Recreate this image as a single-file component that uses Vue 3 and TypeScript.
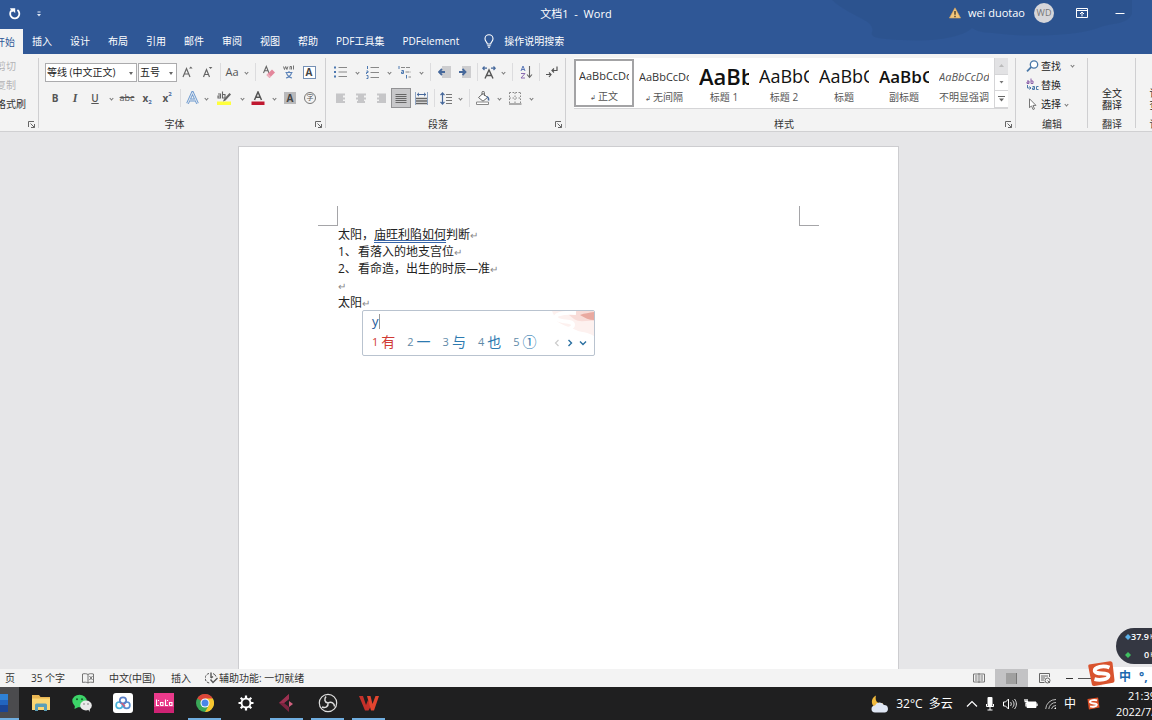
<script setup lang="ts">
import { ref } from 'vue'

interface StyleItem {
  sample: string
  name: string
  kind: string
  mark?: boolean
}

const tabs: string[] = ['插入', '设计', '布局', '引用', '邮件', '审阅', '视图', '帮助', 'PDF工具集', 'PDFelement']

const styleItems: StyleItem[] = [
  { sample: 'AaBbCcDd', name: '正文', kind: 'body', mark: true },
  { sample: 'AaBbCcDd', name: '无间隔', kind: 'body', mark: true },
  { sample: 'AaBb', name: '标题 1', kind: 'h1' },
  { sample: 'AaBbC', name: '标题 2', kind: 'h2' },
  { sample: 'AaBbC', name: '标题', kind: 'h2' },
  { sample: 'AaBbC', name: '副标题', kind: 'sub' },
  { sample: 'AaBbCcDd', name: '不明显强调', kind: 'em' },
]
const activeStyle = ref(0)

const candidates: string[] = ['有', '一', '与', '也', '①']
const fontName = ref('等线 (中文正文)')
const fontSize = ref('五号')
</script>

<template>
  <div class="screen">
    <header class="titlebar">
      <svg class="swirl" width="360" height="54" viewBox="0 0 360 54"><path d="M40 0h300v14c-6 12-20 8-34 14s-60 10-96 6c-14-2-20 0-30-6-10 10-40 14-70 12-22-1-32-2-30-8 4-12-20-14-40-32z" fill="#2b4f88" opacity=".45" /></svg>
      <div class="quick">
        <button aria-label="重复">
          <svg width="14" height="14" viewBox="0 0 14 14"><path d="M3.400 3.600A4.600 4.600 0 1 0 9.400 3" fill="none" stroke="#fff" stroke-width="1.800" /><path d="M2 1.200h5.200v5L5.600 4.400 3.800 5z" fill="#fff" /></svg>
        </button>
        <button aria-label="自定义快速访问工具栏">
          <svg width="6" height="8" viewBox="0 0 6 8"><path d="M1.500 2h3" stroke="#dfe7f5" /><path d="M1 4h4L3 6.500z" fill="#dfe7f5" /></svg>
        </button>
      </div>
      <h1>文档1&nbsp; -&nbsp; Word</h1>
      <div class="account">
        <svg width="12" height="12" viewBox="0 0 12 12"><path d="M6 .8 11.600 11H.4z" fill="#f3c77c" stroke="#d9a55a" stroke-width=".6" /><path d="M6 4v3.800M6 8.800v1.400" stroke="#3a3020" stroke-width="1.300" /></svg>
        <span class="user">wei duotao</span>
        <span class="avatar">WD</span>
        <button class="display" aria-label="功能区显示选项">
          <svg width="12" height="10" viewBox="0 0 12 10"><path d="M.5.5h11v9H.5zM.5 2.500h11M6 8.400V4.200M4 6l2-2 2 2" fill="none" stroke="#fff" /></svg>
        </button>
        <button class="min" aria-label="最小化"><svg width="10" height="3" viewBox="0 0 10 3"><path d="M.5 1.500h9" stroke="#fff" /></svg></button>
      </div>
    </header>

    <nav class="tabs">
      <button class="tab current">开始</button>
      <button v-for="t in tabs" :key="t" class="tab">{{ t }}</button>
      <button class="tab tell">
        <svg width="12" height="14" viewBox="0 0 12 14"><path d="M4.300 10C4.300 8 2 7.500 2 4.700a4 4 0 0 1 8 0C10 7.500 7.700 8 7.700 10zM4.300 11.700h3.400M5 13.200h2" fill="none" stroke="#fff" stroke-width="1.100" /></svg>
        操作说明搜索
      </button>
    </nav>

    <section class="ribbon">
      <div class="group clip">
        <div class="cliplist">
          <button class="off">剪切</button>
          <button class="off">复制</button>
          <button>格式刷</button>
        </div>
        <button class="launch" aria-label="剪贴板设置"><svg width="7" height="7" viewBox="0 0 7 7"><path d="M.5 6V.5H6M2.500 2.500l4 4M6.500 3v3.500H3" fill="none" stroke="#666" /></svg></button>
      </div>

      <div class="group font">
        <div class="row">
          <label class="combo wide"><select v-model="fontName" aria-label="字体"><option>等线 (中文正文)</option></select><i class="tri"></i></label>
          <label class="combo"><select v-model="fontSize" aria-label="字号"><option>五号</option></select><i class="tri"></i></label>
          <button class="ic" aria-label="增大字号"><svg width="14" height="14" viewBox="0 0 14 14"><path d="M3 12 6.500 3.500 10 12M4.300 9h4.400" fill="none" stroke="#666" stroke-width="1.200" /><path d="M9 3.500 10.800 1.500l1.800 2z" fill="#666" /></svg></button>
          <button class="ic" aria-label="减小字号"><svg width="14" height="14" viewBox="0 0 14 14"><path d="M3.500 12 6.500 4.500 9.500 12M4.700 9.500h3.600" fill="none" stroke="#666" stroke-width="1.200" /><path d="M8.800 2h3.600l-1.800 2z" fill="#666" /></svg></button>
          <i class="sep"></i>
          <button class="ic s16 aa">Aa</button>
          <button class="caret" aria-label="更改大小写选项"></button>
          <i class="sep"></i>
          <button class="ic" aria-label="清除格式"><svg width="14" height="14" viewBox="0 0 14 14"><path d="M1.500 8 4.300 1.500 7 8M2.500 5.800h3.600" fill="none" stroke="#666" stroke-width="1.100" /><path d="m4.500 10 5.500-5.500 3 3L7.500 13z" fill="#e3869b" /><path d="m4.500 10 1.500-1.500 3 3L7.500 13z" fill="#eeb1bf" /></svg></button>
          <button class="ic" aria-label="拼音指南"><svg width="14" height="14" viewBox="0 0 14 14"><path d="m1.500 1.500 1 3 1.200-3 1.200 3 1-3M8 4.500v-3h1.500v3M11.500.5v4" fill="none" stroke="#666" stroke-width=".9" /><path d="M3.500 7.500h7M7 6v1.500M4.500 8c.8 2.500 3 4.500 5.500 5M9.500 8c-.8 2.500-3 4.500-5.500 5" fill="none" stroke="#5b82b8" stroke-width="1.100" /></svg></button>
          <button class="ic" aria-label="字符边框"><span class="boxed">A</span></button>
        </div>
        <div class="row">
          <button class="ic b">B</button>
          <button class="ic i">I</button>
          <button class="ic u">U</button>
          <button class="caret" aria-label="下划线选项"></button>
          <button class="ic strike">abc</button>
          <button class="ic x">x<sub>2</sub></button>
          <button class="ic x">x<sup>2</sup></button>
          <i class="sep"></i>
          <button class="ic s16" aria-label="文本效果"><svg width="13" height="14" viewBox="0 0 13 14"><path d="M1.500 12.500 6.500 1.500l5 11M3.500 9h6" fill="none" stroke="#6f9bd0" stroke-width="2.800" /><path d="M1.500 12.500 6.500 1.500l5 11M3.500 9h6" fill="none" stroke="#f3f3f3" stroke-width=".9" /></svg></button>
          <button class="caret" aria-label="文本效果选项"></button>
          <button class="ic s24" aria-label="突出显示"><svg width="16" height="14" viewBox="0 0 16 14"><path d="M1 10.500h14V14H1z" fill="#ffff3c" /><path d="M2 3h2.500v4H2V5h2.500M6.500.5V7h2.500V3.500H6.500" fill="none" stroke="#666" stroke-width="1.100" /><path d="m7 10.500 1-2.500 5.500-6 1.500 1.500-5.500 6z" fill="#666" /></svg></button>
          <button class="caret" aria-label="突出显示颜色"></button>
          <button class="ic" aria-label="字体颜色"><svg width="14" height="14" viewBox="0 0 14 14"><path d="M3.500 9 7 1l3.500 8M4.700 6.300h4.600" fill="none" stroke="#555" stroke-width="1.500" /><path d="M.5 10.500h13V14H.5z" fill="#c01830" /></svg></button>
          <button class="caret" aria-label="字体颜色选项"></button>
          <button class="ic" aria-label="字符底纹"><span class="shade">A</span></button>
          <button class="ic" aria-label="带圈字符"><span class="ring">字</span></button>
        </div>
        <h2>字体</h2>
        <button class="launch" aria-label="字体设置"><svg width="7" height="7" viewBox="0 0 7 7"><path d="M.5 6V.5H6M2.500 2.500l4 4M6.500 3v3.500H3" fill="none" stroke="#666" /></svg></button>
      </div>

      <div class="group para">
        <div class="row">
          <button class="ic" aria-label="项目符号"><svg width="14" height="12" viewBox="0 0 14 12"><path d="M0 .5h2v2H0zM0 5h2v2H0zM0 9.500h2v2H0z" fill="#4d78b0" /><path d="M4.500 1.500H13M4.500 6H13M4.500 10.500H13" stroke="#888" /></svg></button>
          <button class="caret" aria-label="项目符号库"></button>
          <button class="ic" aria-label="编号"><svg width="14" height="13" viewBox="0 0 14 13"><path d="M1.500 0v3M.5 5h1.500v1.500H.5V8M.5 9.500H2V12.500H.5" fill="none" stroke="#4d78b0" /><path d="M4.500 1.500H13M4.500 6.500H13M4.500 11.500H13" stroke="#888" /></svg></button>
          <button class="caret" aria-label="编号库"></button>
          <button class="ic" aria-label="多级列表"><svg width="14" height="13" viewBox="0 0 14 13"><path d="M1 0v3M3.500 4.500H5.500V7.500H3.500V6H5.500M8.500 9v3.500" fill="none" stroke="#4d78b0" /><path d="M3 1.500h10M7.500 6H13M10.500 11H13" stroke="#888" stroke-dasharray="4 1" /></svg></button>
          <button class="caret" aria-label="多级列表库"></button>
          <i class="sep"></i>
          <button class="ic" aria-label="减少缩进量"><svg width="13" height="12" viewBox="0 0 13 12"><path d="M4 0h9v12H4z" fill="#cdcdcf" /><path d="M1 6h6M4 3 1 6l3 3" fill="none" stroke="#46689b" stroke-width="1.800" /></svg></button>
          <button class="ic" aria-label="增加缩进量"><svg width="13" height="12" viewBox="0 0 13 12"><path d="M4 0h9v12H4z" fill="#cdcdcf" /><path d="M1 6h6M4.500 3l3 3-3 3" fill="none" stroke="#46689b" stroke-width="1.800" /></svg></button>
          <i class="sep"></i>
          <button class="ic s16" aria-label="中文版式"><svg width="14" height="13" viewBox="0 0 14 13"><path d="M3 12.500 7 4l4 8.500M4.500 9.500h5" fill="none" stroke="#555" stroke-width="1.400" /><path d="M.5 2.200h4.500M9 2.200h4.500M2.500.5.800 2.200 2.500 4M11.500.5l1.700 1.700L11.500 4" fill="none" stroke="#46689b" stroke-width="1.200" /></svg></button>
          <button class="caret" aria-label="中文版式选项"></button>
          <i class="sep"></i>
          <button class="ic" aria-label="排序"><svg width="13" height="14" viewBox="0 0 13 14"><path d="M1 6 3 1l2 5M1.600 4.500h2.800" fill="none" stroke="#5b78b8" /><path d="M1 8.500h4L1 13h4" fill="none" stroke="#8a6ab0" /><path d="M9.500 1v11M7 9.500l2.500 2.800L12 9.500" fill="none" stroke="#666" stroke-width="1.100" /></svg></button>
          <i class="sep"></i>
          <button class="ic s16" aria-label="显示编辑标记"><svg width="13" height="12" viewBox="0 0 13 12"><path d="M12 .5v4H7M9 2.500l-2 2 2 2M1 8.500h5M4 6.500l2 2-2 2.500" fill="none" stroke="#555" stroke-width="1.200" /></svg></button>
        </div>
        <div class="row">
          <button class="ic" aria-label="左对齐"><svg width="12" height="10" viewBox="0 0 12 10"><path d="M1 1.500h9M1 3.500h7M1 5.500h9M1 7.500h7M1 9h9" stroke="#c6c6c8" stroke-width="2" /></svg></button>
          <button class="ic" aria-label="居中"><svg width="12" height="10" viewBox="0 0 12 10"><path d="M1 1.500h10M3 3.500h6M1 5.500h10M3 7.500h6M2 9h8" stroke="#c6c6c8" stroke-width="2" /></svg></button>
          <button class="ic" aria-label="右对齐"><svg width="12" height="10" viewBox="0 0 12 10"><path d="M2 1.500h9M4 3.500h7M2 5.500h9M4 7.500h7M2 9h9" stroke="#c6c6c8" stroke-width="2" /></svg></button>
          <button class="ic pressed" aria-label="两端对齐"><svg width="12" height="11" viewBox="0 0 12 11"><path d="M.5 1.500h11M.5 3.500h11M.5 5.500h11M.5 7.500h11M.5 9.500h11" stroke="#666" /></svg></button>
          <button class="ic" aria-label="分散对齐"><svg width="13" height="13" viewBox="0 0 13 13"><path d="M.5 0v13M12.500 0v13" stroke="#8fa5c4" /><path d="M2 2.500h9M4 .8 2.200 2.500 4 4.200M9 .8l1.800 1.700L9 4.200" fill="none" stroke="#46689b" /><path d="M1 6.500h11M1 9h11M1 11.500h11" stroke="#666" stroke-width="1.300" /></svg></button>
          <i class="sep"></i>
          <button class="ic s16" aria-label="行距"><svg width="12" height="13" viewBox="0 0 12 13"><path d="M2.500 1v11M.5 3.200l2-2.200 2 2.200M.5 9.800l2 2.200 2-2.200" fill="none" stroke="#46689b" stroke-width="1.200" /><path d="M6 2.500h6M6 5.500h6M6 8.500h6M6 11.500h6" stroke="#777" /></svg></button>
          <button class="caret" aria-label="行距选项"></button>
          <i class="sep"></i>
          <button class="ic" aria-label="底纹"><svg width="14" height="14" viewBox="0 0 14 14"><path d="m2.500 6.500 4.500-4 4.500 4-4.500 3.700z" fill="#fff" stroke="#666" /><path d="M6 4V1.500a1.200 1.200 0 0 1 2.400 0V5" fill="none" stroke="#666" /><path d="M11 5.500c1.500 1 1.800 2.500 1.500 4" fill="none" stroke="#46689b" stroke-width="1.500" /><path d="M.5 11h12v2.500H.5z" fill="#fff" stroke="#888" /></svg></button>
          <button class="caret" aria-label="底纹颜色"></button>
          <button class="ic" aria-label="边框"><svg width="13" height="13" viewBox="0 0 13 13"><path d="M.5.5h11M11.500.5v11M6 .5v11M.5 6h11M.5.5v11" fill="none" stroke="#888" stroke-dasharray="1.500 1.500" /><path d="M0 12h12.500" stroke="#666" /></svg></button>
          <button class="caret" aria-label="边框选项"></button>
        </div>
        <h2>段落</h2>
        <button class="launch" aria-label="段落设置"><svg width="7" height="7" viewBox="0 0 7 7"><path d="M.5 6V.5H6M2.500 2.500l4 4M6.500 3v3.500H3" fill="none" stroke="#666" /></svg></button>
      </div>

      <div class="group styles">
        <div class="gallery">
          <button
            v-for="(s, i) in styleItems"
            :key="i"
            class="style"
            :class="{ chosen: i === activeStyle }"
            @click="activeStyle = i"
          >
            <span class="sample" :class="s.kind">{{ s.sample }}</span>
            <span class="sname"><small v-if="s.mark">↲</small>{{ s.name }}</span>
          </button>
          <div class="scroll">
            <button class="dim" aria-label="上一行"><svg width="5" height="3" viewBox="0 0 5 3"><path d="M0 3h5L2.500 0z" fill="#bbb" /></svg></button>
            <button aria-label="下一行"><svg width="5" height="3" viewBox="0 0 5 3"><path d="M.5 0h4L2.500 2.500z" fill="#777" /></svg></button>
            <button aria-label="更多样式"><svg width="7" height="6" viewBox="0 0 7 6"><path d="M0 .5h7" stroke="#666" /><path d="M1 2.500h5L3.500 5.500z" fill="#666" /></svg></button>
          </div>
        </div>
        <h2>样式</h2>
        <button class="launch" aria-label="样式窗格"><svg width="7" height="7" viewBox="0 0 7 7"><path d="M.5 6V.5H6M2.500 2.500l4 4M6.500 3v3.500H3" fill="none" stroke="#666" /></svg></button>
      </div>

      <div class="group edit">
        <div class="editlist">
          <button><svg width="13" height="12" viewBox="0 0 13 12"><circle cx="8" cy="4.500" r="3.700" fill="#fff" stroke="#4a78a8" stroke-width="1.300" /><path d="M5.200 7.200 1 11.300" stroke="#4a78a8" stroke-width="1.800" /></svg>查找<i class="chev far"></i></button>
          <button><svg width="13" height="13" viewBox="0 0 13 13"><path d="M1 3h2v2.500H1V4h2M5 .5v5h2V3H5" fill="none" stroke="#8a5fa8" /><path d="M1.500 7v3h3M3.500 8.500 5 10l-1.500 1.500" fill="none" stroke="#4a78a8" /><path d="M6.500 8.500h2v3h-2V10h2M12.500 8.500H10.500v3h2" fill="none" stroke="#4a78a8" /></svg>替换</button>
          <button><svg width="13" height="12" viewBox="0 0 13 12"><path d="M3.500.8v9l2-2 1.500 3.700 1.500-.6L7 7.400h3z" fill="#fff" stroke="#777" /></svg>选择<i class="chev"></i></button>
        </div>
        <h2>编辑</h2>
      </div>
      <div class="group trans">
        <button class="big">全文<br />翻译</button>
        <h2>翻译</h2>
      </div>
      <div class="group paper">
        <button class="big">论文<br />查重</button>
        <h2>论文</h2>
      </div>
    </section>

    <main class="workspace">
      <article class="page">
        <div class="corners"><i></i><i class="right"></i></div>
        <div class="text">
          <p>太阳，<u>庙旺利陷如何</u>判断<b>↵</b></p>
          <p><span class="num">1、</span>看落入的地支宫位<b>↵</b></p>
          <p><span class="num">2、</span>看命造，出生的时辰—准<b>↵</b></p>
          <p><b>↵</b></p>
          <p>太阳<b>↵</b></p>
        </div>
        <div class="ime">
          <svg class="skin" width="50" height="26" viewBox="0 0 50 26"><path d="M8 0h42v25c-8-5-12-3-18-6S16 14 12 9z" fill="#fdf1ef" /><path d="M20 0h30v10c-8-1-14 2-20-2z" fill="#f8dcd8" /><path d="M36 4c5-2 9-2 14-3v8c-5 0-9-2-14-5z" fill="#e9a9a0" /><path d="M32 2C18 1 8 4 13 8s16 1 16 6-14 6-24 3" fill="none" stroke="#fff" stroke-width="4" /></svg>
          <div class="typed">y</div>
          <div class="cands">
            <button v-for="(c, i) in candidates" :key="c" :class="{ first: i === 0 }"><small>{{ i + 1 }}</small>{{ c }}</button>
            <span class="pager">
              <button aria-label="上一页"><svg width="8" height="8" viewBox="0 0 8 8"><path d="M5.500 1 2.500 4l3 3" fill="none" stroke="#ccc" stroke-width="1.200" /></svg></button>
              <button aria-label="下一页"><svg width="8" height="8" viewBox="0 0 8 8"><path d="m2.500 1 3 3-3 3" fill="none" stroke="#2a6fa0" stroke-width="1.400" /></svg></button>
              <button aria-label="展开"><svg width="8" height="8" viewBox="0 0 8 8"><path d="m1 2.500 3 3 3-3" fill="none" stroke="#2a6fa0" stroke-width="1.400" /></svg></button>
            </span>
          </div>
        </div>
      </article>
      <aside class="net">
        <div><i class="up"></i>37.9<small>K/s</small></div>
        <div><i class="down"></i>0<small>K/s</small></div>
      </aside>
    </main>

    <footer class="status">
      <span class="pg">页</span>
      <span class="words">35 个字</span>
      <svg class="book" width="12" height="11" viewBox="0 0 12 11"><path d="M6 1.500C4.500.5 2.500.5.500 1v8.500c2-.5 4-.5 5.500.5zM6 1.500C7.500.5 9 .5 11.500 1v8.500c-2-.5-4-.5-5.500.5M7.500 3l3 4M10.500 3l-3 4" fill="none" stroke="#666" stroke-width=".9" /></svg>
      <span class="lang">中文(中国)</span>
      <span class="ins">插入</span>
      <svg width="13" height="12" viewBox="0 0 13 12"><path d="M4 1.500A4.800 4.800 0 0 0 5 11" fill="none" stroke="#555" stroke-dasharray="2.500 1" /><path d="M6 .5v5.500M6 6l2-1.500M5.500 7.500 8 10.500l4.500-4.500" fill="none" stroke="#555" stroke-width="1.400" /><path d="M8 1.500a5 5 0 0 1 3 3" fill="none" stroke="#555" /></svg>
      <span class="acc">辅助功能: 一切就绪</span>
      <div class="views">
        <button aria-label="阅读视图"><svg width="12" height="10" viewBox="0 0 12 10"><path d="M.5 1h11v8H.5zM6 0v10M2 3h2.500M2 5h2.500M2 7h2.500M7.500 3H10M7.500 5H10M7.500 7H10" fill="none" stroke="#777" /></svg></button>
        <button class="on" aria-label="页面视图"><svg width="11" height="11" viewBox="0 0 11 11"><path d="M0 0h11v11H0z" fill="#a0a0a0" /><path d="M10.500 0v11" stroke="#777" /></svg></button>
        <button aria-label="Web 版式视图"><svg width="12" height="11" viewBox="0 0 12 11"><path d="M10.500 4V.5H.5v9h5M2 3h7M2 5h4M2 7h3" fill="none" stroke="#666" /><circle cx="8.500" cy="7.500" r="2.500" fill="none" stroke="#666" /><path d="M8.500 7.500 11 10" stroke="#666" /></svg></button>
      </div>
      <button class="zoomout" aria-label="缩小"><svg width="7" height="3" viewBox="0 0 7 3"><path d="M0 1.500h7" stroke="#333" /></svg></button>
      <i class="track"></i>
      <div class="sogou">
        <svg width="27" height="27" viewBox="0 0 27 27"><path d="M1 4.500 22 1.200q2-.2 2.500 1.600l2 17.500q.1 2-1.500 2.500L6.500 26q-2 .2-2.600-1.500L.3 6.500Q0 5 1 4.500z" fill="#d9532e" /><path d="M21.500 7.500C15 5 6.500 7 6.700 10.700c.2 4.300 14 1.300 13.800 5.300C20.300 19.500 12 20.700 6.500 19.200" fill="none" stroke="#fff" stroke-width="3.800" /></svg>
        <strong>中</strong><strong class="punct">°,</strong>
      </div>
    </footer>

    <footer class="taskbar">
      <button class="task word" aria-label="Word"><svg width="8" height="18" viewBox="0 0 8 18"><path d="M0 0h8v6H0z" fill="#2f82d8" /><path d="M0 6h8v5H0z" fill="#2265c0" /><path d="M0 11h8v7H0z" fill="#1a4596" /></svg></button>
      <button class="task" aria-label="文件资源管理器"><svg width="20" height="18" viewBox="0 0 20 18"><path d="M1 1h7l1.500 2H19v13H1z" fill="#e9b653" /><path d="M1 4.500h18V16H1z" fill="#fbd774" /><path d="M4 17v-6q0-1.500 1.500-1.500h9Q16 9.500 16 11v6h-3v-4H7v4z" fill="#5a9fb8" /></svg></button>
      <button class="task" aria-label="微信"><svg width="20" height="18" viewBox="0 0 20 18"><ellipse cx="7.500" cy="7" rx="7.200" ry="6.300" fill="#3cd468" /><path d="m3 11-.5 4 4-2z" fill="#3cd468" /><ellipse cx="14" cy="11.500" rx="5.800" ry="5" fill="#e9e9e9" /><path d="m16 15 1.500 3 .5-4z" fill="#e9e9e9" /><circle cx="5" cy="5.200" r="1" fill="#175b2c" /><circle cx="10" cy="5.200" r="1" fill="#175b2c" /><circle cx="12" cy="10" r=".8" fill="#777" /><circle cx="16" cy="10" r=".8" fill="#777" /></svg></button>
      <button class="task" aria-label="百度网盘"><svg width="20" height="20" viewBox="0 0 20 20"><rect width="20" height="20" rx="3" fill="#fff" /><circle cx="6.300" cy="12.200" r="3.200" fill="none" stroke="#4bb5dc" stroke-width="1.700" /><circle cx="13.700" cy="12.200" r="3.200" fill="none" stroke="#5a8fd0" stroke-width="1.700" /><circle cx="10" cy="7.500" r="3.200" fill="none" stroke="#5a7fc8" stroke-width="1.700" /><path d="m8.500 10 3.500 3.500" stroke="#d8607c" stroke-width="1.700" /></svg></button>
      <button class="task" aria-label="LaLa"><svg width="20" height="20" viewBox="0 0 20 20"><path d="M0 0h20v20H0z" fill="#ea3a8b" /><path d="M0 14h20v6H0z" fill="#cf2374" /><path d="M2.500 6.500V12.500h2.500M6.500 12.500v-3h2.500v3H6.500M11.500 6.500V12.500H14M15.500 12.500v-3H18v3H15.500M4.500 7v1M13.500 7v1" fill="none" stroke="#fff" stroke-width="1.100" /></svg></button>
      <button class="task open" aria-label="Chrome"><svg width="18" height="18" viewBox="0 0 18 18"><circle cx="9" cy="9" r="9" fill="#3aa757" /><path d="M9 9 1.200 4.500a9 9 0 0 1 15.600 0z" fill="#dc4538" /><path d="M9 4.500h7.800A9 9 0 0 1 9 18l4-7z" fill="#f7c52f" /><circle cx="9" cy="9" r="4.500" fill="#fff" /><circle cx="9" cy="9" r="3.500" fill="#4a86e8" /></svg></button>
      <button class="task" aria-label="设置"><svg width="16" height="16" viewBox="0 0 16 16"><circle cx="8" cy="8" r="4.500" fill="none" stroke="#fff" stroke-width="1.900" /><path d="M8 .5v2.500M8 13v2.500M.5 8H3M13 8h2.500M2.700 2.700l1.800 1.800M11.500 11.500l1.800 1.800M2.700 13.300l1.800-1.800M11.500 4.500l1.800-1.800" stroke="#fff" stroke-width="2.200" /></svg></button>
      <button class="task open" aria-label="录屏"><svg width="18" height="20" viewBox="0 0 18 20"><path d="m1 10 10-9v5l-5 4 5 4v5z" fill="#7c2440" /><path d="m1 10 10-9v5l-5 4z" fill="#9c3050" /><path d="m11 8 4 3-4 3z" fill="#d0607e" /></svg></button>
      <button class="task open" aria-label="OBS"><svg width="20" height="20" viewBox="0 0 20 20"><circle cx="10" cy="10" r="8.700" fill="#222" stroke="#ddd" stroke-width="1.200" /><path d="M10 10C6.500 9.500 6 6 8 3.500M10 10c3.500-2 6.500.5 6.500 3.500M10 10c.5 3.500-2.500 5.500-6 4" fill="none" stroke="#ddd" stroke-width="1.500" /></svg></button>
      <button class="task open" aria-label="WPS"><svg width="20" height="16" viewBox="0 0 20 16"><path d="M0 1h4l3 9 2-5 3 6-2.500 4.500H6z" fill="#c5302a" /><path d="M8 1h3.500l2 8 3-8H20l-5 14.500h-3z" fill="#e2452f" /></svg></button>
      <div class="tray">
        <svg class="moon" width="18" height="18" viewBox="0 0 18 18"><path d="M5 .5C3.500 6 7 9.500 12 8c-1 3-5 5-8.500 3.500S-.5 3 5 .5z" fill="#f0b93c" /><path d="M4 17.500a3.500 3.500 0 0 1 0-7 5 5 0 0 1 9-.5 3.800 3.800 0 0 1 1 7.500z" fill="#dfe6f3" /></svg>
        <span class="temp">32°C&nbsp; 多云</span>
        <svg class="t1" width="12" height="8" viewBox="0 0 12 8"><path d="m1 6.500 5-5 5 5" fill="none" stroke="#fff" stroke-width="1.200" /></svg>
        <svg class="t2" width="8" height="14" viewBox="0 0 8 14"><rect x="1.500" width="5" height="9" rx="1" fill="#fff" /><path d="M.5 7v2.500h7V7M4 9v4M1.500 13h5" fill="none" stroke="#fff" /></svg>
        <svg class="t3" width="14" height="12" viewBox="0 0 14 12"><path d="M.5 4h2L5.500 1v10L2.500 8h-2z" fill="none" stroke="#fff" /><path d="M7.500 4c1 1 1 3 0 4M9.500 2.500c2 2 2 5 0 7M11.500 1c2.500 3 2.500 7 0 10" fill="none" stroke="#ddd" /></svg>
        <svg class="t4" width="14" height="10" viewBox="0 0 14 10"><path d="M3 3h9v5.500H3z" fill="#fff" stroke="#fff" /><path d="M13 4.500v2.500M1 0v2M3 0v2M.5 2.500h3v2H2v3" fill="none" stroke="#fff" stroke-width="1.300" /></svg>
        <svg class="t5" width="12" height="12" viewBox="0 0 12 12"><path d="M.7 11A10 10 0 0 1 11 1.500M3.800 11A7 7 0 0 1 11 4.500M6.500 11A4.500 4.500 0 0 1 11 7.500" fill="none" stroke="#bbb" /><path d="M9 11l2-2v2z" fill="#fff" /></svg>
        <span class="cn">中</span>
        <svg class="t6" width="13" height="13" viewBox="0 0 27 27"><path d="M1 4 23 1l3 21L4 26z" fill="#dd5128" /><path d="M21 7C15 5 6 6.500 6.200 10.500c.2 4.500 14.500 1.500 14.300 5.700C20.300 20 12 21 6.500 19.500" fill="none" stroke="#fff" stroke-width="4" /></svg>
        <time class="clock">21:39<br />2022/7/17</time>
      </div>
    </footer>
  </div>
</template>

<style>
html, body, #app { height: 100%; }
body { margin: 0; overflow: hidden; }
</style>

<style scoped>
.screen {
  height: 100%;
  display: flex;
  flex-direction: column;
  overflow: hidden;
  font-family: "Open Sans", "Noto Sans CJK SC", sans-serif;
  font-size: 10px;
  line-height: 12px;
  color: #333;
  background: #e6e6e8;
}
button {
  font: inherit;
  color: inherit;
  background: none;
  border: 0;
  padding: 0;
  margin: 0;
  display: inline-flex;
  align-items: center;
  justify-content: center;
  white-space: nowrap;
}
svg { flex: none; display: block; }
h1, h2, p { margin: 0; font-weight: 400; }
i { font-style: normal; }

.titlebar {
  position: relative;
  height: 28px;
  flex: none;
  display: grid;
  grid-template-columns: 1fr auto 1fr;
  align-items: center;
  background: #2f5796;
  color: #fff;
}
.swirl { position: absolute; right: 0; top: 0; z-index: 1; pointer-events: none; }
.titlebar h1 { font-size: 11px; line-height: 14px; }
.quick { display: flex; align-items: center; gap: 14px; padding-left: 8px; }
.account {
  position: relative;
  z-index: 2;
  display: flex;
  align-items: center;
  justify-content: flex-end;
  height: 26px;
  align-self: start;
  padding-right: 27px;
  font-size: 11px;
}
.user { margin: 0 9px 0 7px; }
.avatar {
  width: 20px;
  height: 20px;
  line-height: 20px;
  border-radius: 50%;
  background: #d6d6da;
  color: #777;
  font-size: 9px;
  text-align: center;
}
.display { margin: 0 27px 0 22px; }

.tabs {
  height: 26px;
  flex: none;
  display: flex;
  align-items: stretch;
  background: #2f5796;
  color: #fff;
}
.tab.current {
  width: 23px;
  padding: 0 8px 0 0;
  margin-top: 1px;
  justify-content: flex-end;
  background: #f3f3f3;
  color: #2f5796;
}
.tab + .tab { padding: 0 9px; }
.tabs .tell { gap: 9px; margin-left: 6px; }

.ribbon {
  height: 77px;
  flex: none;
  display: flex;
  background: #f3f3f3;
  border-bottom: 1px solid #d0d0d2;
}
.group {
  position: relative;
  flex: none;
  box-sizing: border-box;
  padding-top: 5px;
}
.group::after {
  content: "";
  position: absolute;
  top: 4px;
  right: 0;
  bottom: 3px;
  width: 1px;
  background: #cfcfd1;
}
.group h2 {
  position: absolute;
  left: 0;
  right: 0;
  bottom: 0;
  text-align: center;
  font-size: 10px;
  line-height: 14px;
}
.launch { position: absolute; right: 4px; bottom: 3px; }
.clip { width: 39px; padding-top: 2px; }
.cliplist { display: flex; flex-direction: column; width: 26px; overflow: hidden; align-items: flex-end; }
.cliplist button { height: 19px; padding-right: 10px; }
.cliplist button:last-child { height: 20px; padding-right: 0; }
.off { color: #b4b4b6; }
.font { width: 287px; }
.font .row { padding-left: 6px; }
.para { width: 240px; }
.para .row { padding-left: 5px; }
.font h2, .para h2 { padding-right: 16px; }
.row { display: flex; align-items: center; height: 26px; }
.ic { width: 20px; height: 20px; color: #555; }
.s16 { width: 16px; }
.s24 { width: 24px; }
.aa { font-size: 11px; }
.caret { width: 12px; height: 20px; }
.caret::before, .chev::before {
  content: "";
  width: 3px;
  height: 3px;
  box-sizing: border-box;
  border-right: 1px solid #777;
  border-bottom: 1px solid #777;
  transform: rotate(45deg);
}
.chev { display: inline-flex; }
.sep { width: 1px; height: 18px; margin: 0 3px; background: #dcdcde; }
.combo {
  position: relative;
  width: 39px;
  height: 19px;
  box-sizing: border-box;
  border: 1px solid #ababad;
  background: #fff;
  display: flex;
  align-items: center;
}
.combo.wide { width: 92px; margin-right: 1px; }
.combo select {
  appearance: none;
  width: 100%;
  height: 17px;
  border: 0;
  padding: 0 0 0 1px;
  background: transparent;
  font: inherit;
  color: #222;
}
.tri {
  position: absolute;
  right: 3px;
  top: 8px;
  border: 2px solid transparent;
  border-top: 3px solid #666;
}
.boxed, .shade {
  width: 11px;
  height: 11px;
  line-height: 11px;
  font-weight: 700;
  text-align: center;
  color: #444;
}
.boxed { border: 1px solid #7590b5; background: #fff; }
.shade { background: #b9b9bb; width: 12px; height: 12px; line-height: 12px; }
.ring {
  width: 10px;
  height: 10px;
  border: 1px solid #777;
  border-radius: 50%;
  font-size: 7px;
  line-height: 10px;
  text-align: center;
}
.b { font-weight: 700; }
.i { font-family: "Liberation Serif", serif; font-style: italic; font-weight: 700; font-size: 12px; }
.u { text-decoration: underline; font-weight: 600; }
.strike { text-decoration: line-through; font-size: 9px; }
.x { font-weight: 700; }
.x sub, .x sup { font-size: 6px; line-height: 6px; color: #46689b; }
.x sub { align-self: flex-end; padding-bottom: 3px; }
.x sup { align-self: flex-start; padding-top: 3px; }
.pressed { background: #c8c8ca; outline: 1px solid #929294; outline-offset: -1px; }

.styles { flex: 1 1 0; min-width: 0; padding: 4px 8px 0 8px; }
.styles h2 { padding-right: 14px; }
.gallery {
  display: flex;
  height: 51px;
  overflow: hidden;
  background: #fff;
  border-bottom: 1px solid #d5d5d7;
  box-sizing: border-box;
}
.style {
  flex: 1 1 0;
  min-width: 0;
  flex-direction: column;
  justify-content: flex-start;
  align-items: stretch;
  padding: 1px 4px 0;
  box-sizing: border-box;
  border: 1px solid transparent;
}
.style.chosen { border: 2px solid #a3a3a5; padding: 0 3px; margin: 1px 0; }
.style.chosen .sample { height: 29px; line-height: 30px; }
.sample {
  height: 30px;
  line-height: 33px;
  overflow: hidden;
  text-align: left;
  color: #111;
}
.body, .em { font-size: 11px; color: #333; }
.em { font-style: italic; color: #555; }
.h1 { font-size: 22px; font-weight: 600; }
.h2 { font-size: 18px; }
.sub { font-size: 17px; font-weight: 600; }
.sname { line-height: 14px; text-align: center; color: #555; }
.sname small { font-size: 7px; margin-right: 2px; }
.scroll { width: 13px; display: flex; flex-direction: column; border-left: 1px solid #d5d5d7; }
.scroll button { flex: 1; border-bottom: 1px solid #d5d5d7; }
.scroll .dim { background: #e2e2e4; }

.edit { width: 72px; padding-top: 2px; }
.editlist { display: flex; flex-direction: column; align-items: flex-start; padding-left: 10px; }
.editlist button { height: 19px; gap: 2px; color: #222; }
.editlist button:last-child { height: 20px; }
.chev { padding-left: 2px; }
.chev.far { padding-left: 8px; }
.trans { width: 48px; }
.big { width: 100%; height: 65px; padding-top: 14px; box-sizing: border-box; color: #222; }
.paper { width: 47px; margin-right: -31px; }

.workspace {
  position: relative;
  flex: 1;
  min-height: 0;
  overflow: hidden;
  padding: 14px 15px 0 0;
  background: #e6e6e8;
}
.page {
  position: relative;
  box-sizing: border-box;
  max-width: 661px;
  height: 100%;
  margin: 0 auto;
  padding: 59px 79px 0;
  background: #fff;
  border: 1px solid #cdcdd0;
  border-bottom: 0;
}
.corners { display: flex; justify-content: space-between; height: 20px; }
.corners i { width: 19px; height: 19px; border-right: 1px solid #a5a5a8; border-bottom: 1px solid #a5a5a8; }
.corners .right { border-right: 0; border-left: 1px solid #a5a5a8; }
.text { padding-left: 20px; font-size: 12px; line-height: 17px; color: #222; }
.text p { height: 17px; }
.text u { text-decoration: underline double #3a66a8 1px; text-underline-offset: 1px; }
.text b { font-size: 10px; line-height: 10px; font-weight: 400; color: #888; }
.num { display: inline-block; width: 20px; }
.ime {
  position: absolute;
  left: 123px;
  top: 163px;
  width: 231px;
  height: 44px;
  border: 1px solid #b9c3cf;
  border-radius: 2px;
  background: #fff;
  color: #2d7ab0;
}
.skin { position: absolute; right: 0; top: 0; }
.typed {
  width: fit-content;
  margin: 3px 0 0 9px;
  font-size: 13px;
  line-height: 15px;
  color: #235a9a;
  border-right: 1px solid #999;
}
.cands { display: flex; align-items: center; padding-left: 9px; height: 26px; gap: 12px; }
.cands > button { font-size: 14px; line-height: 18px; gap: 3px; }
.cands small { font-size: 11px; color: #5f8aa8; }
.cands .first, .cands .first small { color: #d03a34; }
.pager { display: flex; gap: 5px; padding: 2px 0 0 5px; }
.net {
  position: absolute;
  right: -24px;
  bottom: 5px;
  width: 60px;
  height: 36px;
  box-sizing: border-box;
  border-radius: 18px;
  background: #343742;
  color: #fff;
  font-size: 9px;
  font-weight: 600;
  line-height: 18px;
  white-space: nowrap;
}
.net div { display: flex; align-items: center; padding-left: 9px; }
.net div + div { gap: 13px; }
.net small { font-size: 7px; font-weight: 400; margin-left: 1px; }
.net div + div small { margin-left: -12px; }
.net i { width: 6px; height: 6px; clip-path: polygon(50% 0, 100% 50%, 50% 100%, 0 50%); }
.up { background: #5ab0e8; }
.down { background: #3fc060; }

.status {
  position: relative;
  height: 18px;
  flex: none;
  display: flex;
  align-items: center;
  background: #f3f3f3;
  color: #333;
  white-space: nowrap;
}
.pg { margin-left: 5px; }
.words { margin: 0 17px 0 16px; }
.lang { margin: 0 16px 0 15px; }
.ins { margin-right: 14px; }
.acc { margin-left: 1px; }
.views { display: flex; margin-left: auto; height: 100%; }
.views button { width: 33px; }
.views .on { background: #c3c3c5; }
.zoomout { margin: 0 5px; }
.track { width: 74px; height: 1px; background: #555; }
.sogou {
  position: absolute;
  right: 0;
  bottom: 0;
  width: 50px;
  height: 20px;
  display: flex;
  align-items: center;
  background: #fff;
  color: #1c68ae;
  font-size: 12px;
}
.sogou svg { margin: -8px 4px 0 -14px; }
.punct { margin-left: 8px; }

.taskbar {
  height: 33px;
  flex: none;
  display: flex;
  background: #1f1f20;
  color: #fff;
}
.task { width: 33px; margin-right: 8px; box-sizing: border-box; border-bottom: 2px solid transparent; }
.task.open { border-bottom-color: #70aee0; }
.task.word { width: 19px; margin-right: 5px; justify-content: flex-start; background: #4b4b4e; border-bottom-color: #70aee0; }
.tray { margin-left: auto; display: flex; align-items: center; font-size: 12px; line-height: 16px; white-space: nowrap; }
.temp { margin: 0 13px 0 7px; }
.t1 { margin-right: 8px; }
.t2 { margin-right: 9px; }
.t3, .t4, .t5 { margin-right: 7px; }
.cn { margin-right: 11px; }
.t6 { margin-right: 16px; }
.clock { font-size: 11px; text-align: center; margin-right: -16px; }
</style>
